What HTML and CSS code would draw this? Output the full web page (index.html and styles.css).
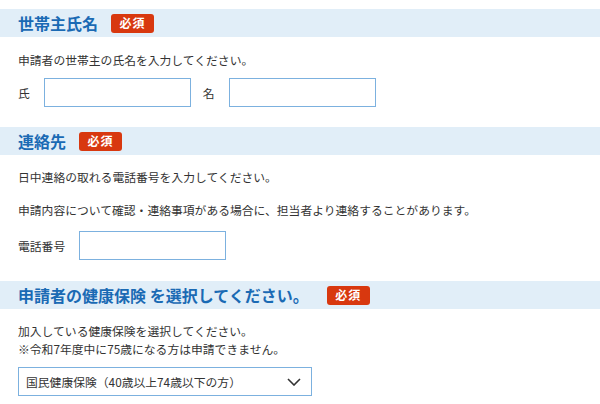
FILE: index.html
```html
<!DOCTYPE html>
<html lang="ja">
<head>
<meta charset="utf-8">
<title>申請フォーム</title>
<link rel="stylesheet" href="styles.css">
</head>
<body>
<form class="form">
  <section class="section section-name">
    <h2 class="section-head"><span class="section-title">世帯主氏名</span><span class="badge">必須</span></h2>
    <p class="note">申請者の世帯主の氏名を入力してください。</p>
    <div class="field-row">
      <label class="field-label" for="sei">氏</label>
      <input class="text-input" id="sei" type="text">
      <label class="field-label" for="mei">名</label>
      <input class="text-input" id="mei" type="text">
    </div>
  </section>

  <section class="section section-contact">
    <h2 class="section-head"><span class="section-title">連絡先</span><span class="badge">必須</span></h2>
    <p class="note">日中連絡の取れる電話番号を入力してください。</p>
    <p class="note note-second">申請内容について確認・連絡事項がある場合に、担当者より連絡することがあります。</p>
    <div class="field-row field-row-tel">
      <label class="field-label" for="tel">電話番号</label>
      <input class="text-input" id="tel" type="text">
    </div>
  </section>

  <section class="section section-insurance">
    <h2 class="section-head section-head-wide"><span class="section-title">申請者の健康保険 を選択してください。</span><span class="badge">必須</span></h2>
    <p class="note">加入している健康保険を選択してください。<br>※令和7年度中に75歳になる方は申請できません。</p>
    <div class="select-box">
      <span class="select-value">国民健康保険（40歳以上74歳以下の方）</span>
      <svg class="chevron" width="14" height="8" viewBox="0 0 14 8" aria-hidden="true"><path d="M1 1 L7 7 L13 1" fill="none" stroke="#333" stroke-width="1.6"/></svg>
    </div>
  </section>
</form>
</body>
</html>
```

FILE: styles.css
```css
* {
  box-sizing: border-box;
}

html, body {
  margin: 0;
  padding: 0;
  background: #fff;
}

body {
  font-family: "Noto Sans CJK JP", "Noto Sans", sans-serif;
  color: #333;
  font-size: 11.8px;
}

.form {
  padding-top: 9px;
  display: flex;
  flex-direction: column;
}

.section {
  display: flex;
  flex-direction: column;
}

.section-contact {
  margin-top: 20px;
}

.section-insurance {
  margin-top: 21px;
}

.section-head {
  margin: 0;
  height: 28px;
  background: #e1eef8;
  display: flex;
  align-items: center;
  gap: 13px;
  padding-left: 18px;
  font-size: 16px;
  font-weight: 700;
  line-height: 1;
}

.section-head-wide {
  gap: 18px;
}

.section-title {
  color: #1a6ab4;
}

.badge {
  display: inline-flex;
  align-items: center;
  justify-content: center;
  width: 43px;
  height: 19px;
  border-radius: 3px;
  background: #d8380f;
  color: #fff;
  font-size: 12px;
  font-weight: 700;
  letter-spacing: 1px;
}

.note {
  margin: 14px 0 0 18px;
  line-height: 18px;
}

.section-contact .note {
  margin-top: 13px;
}

.section-contact .note-second {
  margin-top: 15px;
}

.section-insurance .note {
  margin-top: 13px;
  line-height: 18px;
}

.field-row {
  display: flex;
  align-items: center;
  margin: 9px 0 0 18px;
}

.field-row-tel {
  margin-top: 12px;
}

.field-label {
  margin-right: 14px;
}

.field-label + .text-input + .field-label {
  margin-left: 12px;
}

.text-input {
  width: 147px;
  height: 29px;
  border: 1px solid #7cb1df;
  border-radius: 0;
  background: #fff;
  padding: 0 6px;
  font: inherit;
  outline: none;
}

.field-row-tel .field-label {
  margin-right: 14px;
}

.select-box {
  margin: 9px 0 0 18px;
  width: 294px;
  height: 29px;
  border: 1px solid #7cb1df;
  display: flex;
  align-items: center;
  justify-content: space-between;
  padding: 0 10px 0 7px;
}

.chevron {
  display: block;
}
```
